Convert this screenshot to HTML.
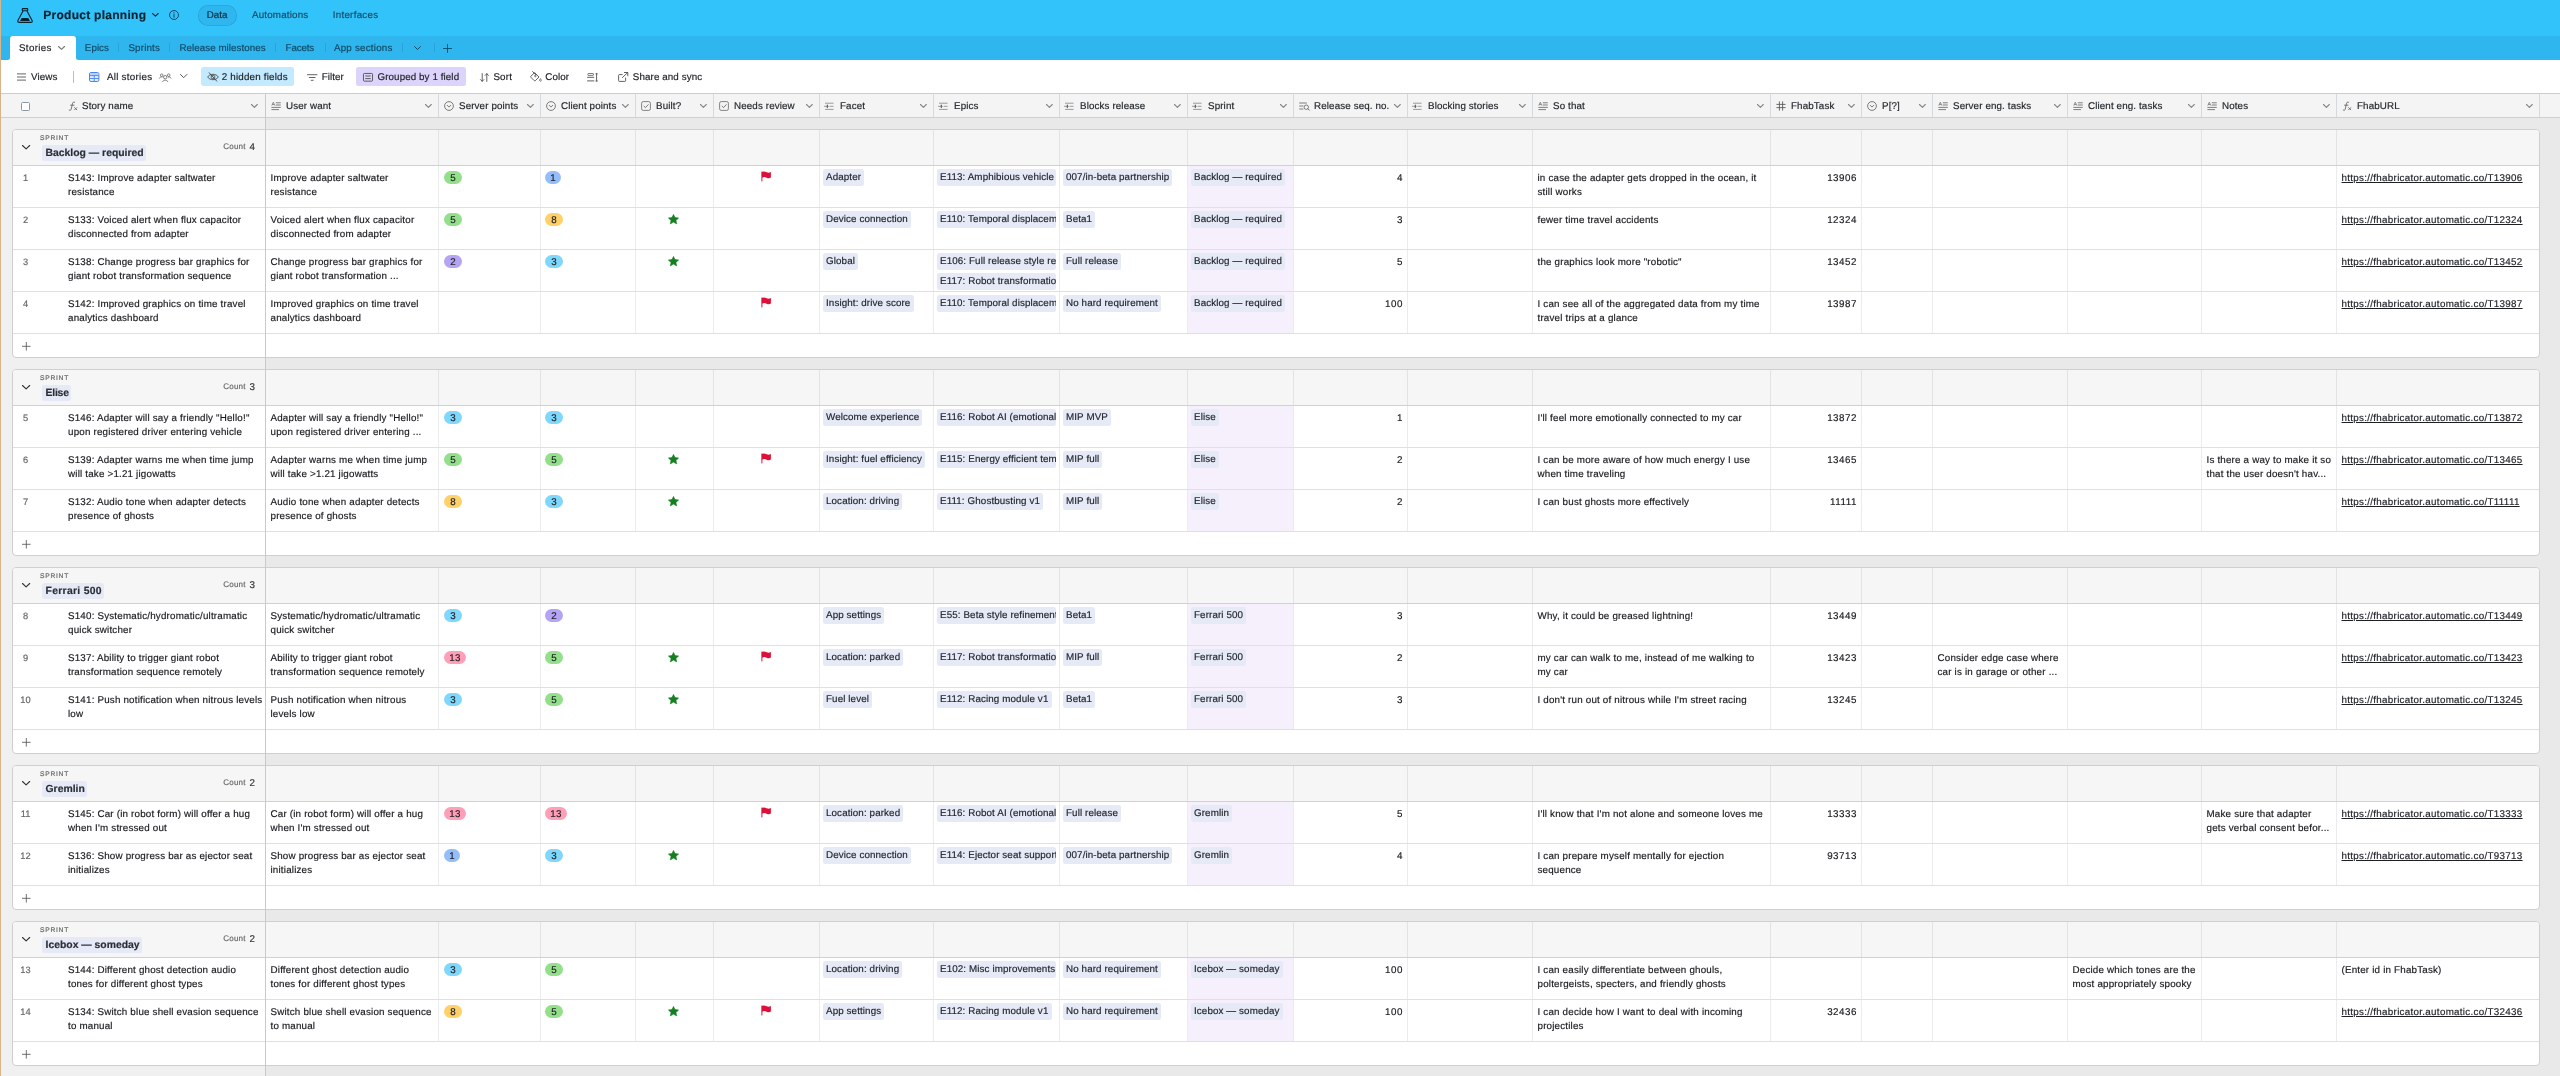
<!DOCTYPE html><html><head><meta charset="utf-8"><title>Product planning</title><style>
*{box-sizing:border-box;margin:0;padding:0}
html{width:2560px;height:1076px;background:#e9e9e9}
body{position:relative;width:2560px;height:1076px;overflow:hidden;background:#e9e9e9;font-family:"Liberation Sans",sans-serif;font-size:9.8px;color:#1d1f25;-webkit-font-smoothing:antialiased;text-rendering:geometricPrecision}
body{will-change:transform;-webkit-text-stroke:0.17px}
.abs{position:absolute}
#strip{left:0;top:0;width:1px;height:1076px;background:#d8b48b;z-index:50}
#top{left:0;top:0;width:2560px;height:36px;background:#33c3fb}
#tabs{left:0;top:36px;width:2560px;height:24px;background:#2fb6ee}
#tool{left:0;top:60px;width:2560px;height:34px;background:#fff;border-bottom:1px solid #cdcdcd}
#hdr{left:0;top:94px;width:2560px;height:24px;background:#f4f4f4;border-bottom:1px solid #cfcfcf}
#leftbg{left:0;top:118px;width:265px;height:958px;background:#f0f0f0}
#frozen{left:265px;top:94px;width:1px;height:982px;background:#c9c9c9;z-index:20}
.t{position:absolute;white-space:nowrap;line-height:12px}
svg{position:absolute;overflow:visible}
/* header cells */
.hc{position:absolute;top:0;height:23px;border-right:1px solid #d6dade}
.hc .ht{position:absolute;left:20px;top:6.9px;line-height:12px;font-size:9.8px;color:#1f2328;white-space:nowrap;letter-spacing:.12px}
.hc svg.ic{left:5px;top:6.7px}
.hc svg.cv{right:6.6px;top:10px}
/* groups */
.g{position:absolute;left:12px;width:2528px;border:1px solid #cfcfcf;border-radius:4px;background:#fff;overflow:hidden}
.gh{position:relative;height:36px;background:#f6f6f6;border-bottom:1px solid #d1d1d1}
.gh i{position:absolute;top:0;width:1px;height:35px;background:#e3e3e3}
.row{position:relative;height:42px;border-bottom:1px solid #dde1e3}
.row i,.row b.f{position:absolute;top:0;width:1px;height:41px;background:#ebeced}
.row b.f,.gh b.f,.add b.f{position:absolute;left:252px;top:0;width:1px;background:#c9c9c9}
.gh b.f{height:35px}.row b.f{height:42px}.add b.f{height:23px}
.add{position:relative;height:23px}
.c{position:absolute;top:0;height:41px;overflow:hidden;padding:5.9px 5px 0 4.5px;line-height:14px;font-size:9.8px;letter-spacing:.19px;white-space:nowrap;color:#191a1e}
.c.r{text-align:right;padding-right:4.1px;letter-spacing:.5px}
.num{position:absolute;left:0;width:25px;top:6px;text-align:center;font-size:9.3px;color:#666;line-height:12px}
.pill{position:absolute;top:5px;height:13px;border-radius:7px;line-height:15px;font-size:9.8px;text-align:center;color:#1d1f25}
.lk{position:absolute;left:3px;height:16.5px;border-radius:2.5px;background:#e6eaf7;padding:1.9px 3.1px 0 3px;line-height:14px;font-size:9.8px;letter-spacing:.11px;white-space:nowrap;overflow:hidden;color:#23262c}
.sp{background:#f5f0fc}
.u{color:#1d1f25;text-decoration:underline;letter-spacing:.3px}
</style></head><body>
<div id="top" class="abs"></div><div id="tabs" class="abs"></div><div id="tool" class="abs"></div><div id="hdr" class="abs"></div><div id="leftbg" class="abs"></div><div id="frozen" class="abs"></div><div id="strip" class="abs"></div>
<svg style="left:17px;top:8px" width="16" height="15" viewBox="0 0 16 15"><rect x="5.3" y="0.6" width="5.4" height="2.2" rx="0.5" fill="none" stroke="#07212d" stroke-width="1.1"/><path d="M6 3 L0.9 12.6 Q0.4 14.2 2 14.3 H14 Q15.6 14.2 15.1 12.6 L10 3" fill="none" stroke="#07212d" stroke-width="1.15" stroke-linejoin="round"/><path d="M4.7 9.9 H11.3 L12.9 13 H3.1 Z" fill="#07212d"/></svg><div class="t" style="left:43.3px;top:7.5px;font-size:12px;font-weight:700;line-height:14px;letter-spacing:.27px;color:#07212d">Product planning</div><svg class="" style="left:152.4px;top:13.2px" width="6.8" height="3.7" viewBox="0 0 6.8 3.7"><path d="M0.5 0.5 L3.4 3.2 L6.3 0.5" fill="none" stroke="#0c3346" stroke-width="1.1" stroke-linecap="round" stroke-linejoin="round"/></svg><svg style="left:169px;top:9.9px" width="10" height="10" viewBox="0 0 10 10"><circle cx="5" cy="5" r="4.45" fill="none" stroke="#0e3d55" stroke-width="0.95"/><path d="M5 4.5 V7.3" stroke="#0e3d55" stroke-width="0.95" stroke-linecap="round"/><circle cx="4.9" cy="2.9" r="0.6" fill="#0e3d55"/></svg><div class="abs" style="left:198px;top:5px;width:38.7px;height:21px;border-radius:11px;background:#2fb6ee;box-shadow:inset 0 0 0 .6px rgba(0,70,110,.22)"></div><div class="t" style="left:206.8px;top:9.9px;color:#0d3040;letter-spacing:-.05px">Data</div><div class="t" style="left:252px;top:9.9px;color:#134a63;letter-spacing:.17px">Automations</div><div class="t" style="left:332.7px;top:9.9px;color:#134a63;letter-spacing:.27px">Interfaces</div>
<div class="abs" style="left:8px;top:58px;width:70px;height:2px;background:#fff"></div><div class="abs" style="left:6px;top:54px;width:4px;height:6px;background:#2fb6ee;border-bottom-right-radius:2.5px"></div><div class="abs" style="left:76px;top:54px;width:4px;height:6px;background:#2fb6ee;border-bottom-left-radius:2.5px"></div><div class="abs" style="left:10px;top:36px;width:66px;height:24px;background:#fff;border-radius:3px 3px 0 0"></div><div class="t" style="left:19px;top:42.9px;color:#1d1f25;letter-spacing:.32px">Stories</div><svg class="" style="left:57.5px;top:46.3px" width="7" height="3.8" viewBox="0 0 7 3.8"><path d="M0.5 0.5 L3.5 3.3 L6.5 0.5" fill="none" stroke="#777" stroke-width="1.1" stroke-linecap="round" stroke-linejoin="round"/></svg><div class="t" style="left:84.8px;top:42.9px;color:#104a66;letter-spacing:0.05px">Epics</div><div class="t" style="left:128.4px;top:42.9px;color:#104a66;letter-spacing:0.17px">Sprints</div><div class="t" style="left:179.4px;top:42.9px;color:#104a66;letter-spacing:0.04px">Release milestones</div><div class="t" style="left:285.6px;top:42.9px;color:#104a66;letter-spacing:-0.18px">Facets</div><div class="t" style="left:333.9px;top:42.9px;color:#104a66;letter-spacing:0.22px">App sections</div><div class="abs" style="left:118px;top:43px;width:1px;height:9px;background:#2aa3d6"></div><div class="abs" style="left:169px;top:43px;width:1px;height:9px;background:#2aa3d6"></div><div class="abs" style="left:275px;top:43px;width:1px;height:9px;background:#2aa3d6"></div><div class="abs" style="left:324.5px;top:43px;width:1px;height:9px;background:#2aa3d6"></div><div class="abs" style="left:402px;top:43px;width:1px;height:9px;background:#2aa3d6"></div><div class="abs" style="left:433.5px;top:43px;width:1px;height:9px;background:#2aa3d6"></div><svg class="" style="left:414.4px;top:46.3px" width="7" height="4" viewBox="0 0 7 4"><path d="M0.5 0.5 L3.5 3.5 L6.5 0.5" fill="none" stroke="#104a66" stroke-width="1.0" stroke-linecap="round" stroke-linejoin="round"/></svg><svg style="left:443.4px;top:43.8px" width="9" height="9" viewBox="0 0 9 9"><path d="M4.5 0.5 V8.5 M0.5 4.5 H8.5" stroke="#104a66" stroke-width="0.9" stroke-linecap="round"/></svg>
<svg style="left:17.4px;top:73px" width="9" height="8" viewBox="0 0 9 8"><path d="M0.4 0.9 H8.6 M0.4 4 H8.6 M0.4 7.1 H8.6" stroke="#555" stroke-width="0.9" stroke-linecap="round"/></svg><div class="t" style="left:31px;top:71.9px;color:#1d1f25;letter-spacing:.12px">Views</div><div class="abs" style="left:73px;top:71px;width:1px;height:12px;background:#bdbdbd"></div><svg style="left:88.8px;top:72px" width="10.4" height="10" viewBox="0 0 10.4 10"><rect x="0.5" y="0.5" width="9.4" height="9" rx="1.4" fill="#e4edff" stroke="#3f7ff2" stroke-width="0.95"/><rect x="1" y="1" width="8.4" height="2.4" fill="#bcd1fb"/><path d="M0.5 3.6 H9.9 M0.5 6.5 H9.9 M5.2 3.6 V9.5" stroke="#3f7ff2" stroke-width="0.85"/></svg><div class="t" style="left:106.9px;top:71.9px;color:#1d1f25;letter-spacing:.27px">All stories</div><svg style="left:159px;top:72.5px" width="12.4" height="9" viewBox="0 0 12.4 9"><circle cx="6.2" cy="4.2" r="1.7" fill="none" stroke="#555" stroke-width="0.75"/><path d="M3.6 8.6 C4 6.6 8.4 6.6 8.8 8.6" fill="none" stroke="#555" stroke-width="0.75" stroke-linecap="round"/><circle cx="2.7" cy="2.2" r="1.3" fill="none" stroke="#555" stroke-width="0.7"/><path d="M0.4 5.2 C0.8 4 2 3.8 3 4" fill="none" stroke="#555" stroke-width="0.7" stroke-linecap="round"/><circle cx="9.7" cy="2.2" r="1.3" fill="none" stroke="#555" stroke-width="0.7"/><path d="M12 5.2 C11.6 4 10.4 3.8 9.4 4" fill="none" stroke="#555" stroke-width="0.7" stroke-linecap="round"/></svg><svg class="" style="left:179.5px;top:74px" width="7.4" height="4.2" viewBox="0 0 7.4 4.2"><path d="M0.5 0.5 L3.7 3.7 L6.9 0.5" fill="none" stroke="#555" stroke-width="1.0" stroke-linecap="round" stroke-linejoin="round"/></svg><div class="abs" style="left:201px;top:67px;width:93px;height:19px;border-radius:2.5px;background:#c3eaff"></div><svg style="left:207px;top:71.5px" width="12" height="10" viewBox="0 0 12 10"><path d="M0.7 5 C2.6 1.4 9.4 1.4 11.3 5 C9.4 8.6 2.6 8.6 0.7 5 Z" fill="none" stroke="#444" stroke-width="0.85"/><circle cx="6" cy="5" r="1.9" fill="none" stroke="#444" stroke-width="0.85"/><path d="M2.2 0.8 L9.8 9.2" stroke="#444" stroke-width="0.9" stroke-linecap="round"/></svg><div class="t" style="left:221.7px;top:71.9px;color:#1d1f25;letter-spacing:.2px">2 hidden fields</div><svg style="left:306.6px;top:73.5px" width="10.4" height="7" viewBox="0 0 10.4 7"><path d="M0.4 0.7 H10 M2.3 3.5 H8.1 M4.2 6.3 H6.2" stroke="#555" stroke-width="0.9" stroke-linecap="round"/></svg><div class="t" style="left:321.7px;top:71.9px;color:#1d1f25;letter-spacing:.06px">Filter</div><div class="abs" style="left:356px;top:67px;width:110px;height:19px;border-radius:2.5px;background:#ddd4fb"></div><svg style="left:363px;top:72.5px" width="10" height="8.6" viewBox="0 0 10 8.6"><rect x="0.45" y="0.45" width="9.1" height="7.7" rx="0.9" fill="none" stroke="#444" stroke-width="0.85"/><path d="M2.3 3 H7.7 M2.3 5.6 H7.7" stroke="#444" stroke-width="0.85"/></svg><div class="t" style="left:377.5px;top:71.9px;color:#1d1f25;letter-spacing:.09px">Grouped by 1 field</div><svg style="left:479.5px;top:72.5px" width="9" height="9" viewBox="0 0 9 9"><path d="M2.2 0.6 V8.2 M0.5 6.6 L2.2 8.3 L3.9 6.6 M6.8 8.4 V0.8 M5.1 2.4 L6.8 0.7 L8.5 2.4" fill="none" stroke="#444" stroke-width="0.85" stroke-linecap="round" stroke-linejoin="round"/></svg><div class="t" style="left:493.4px;top:71.9px;color:#1d1f25;letter-spacing:.18px">Sort</div><svg style="left:530px;top:71px" width="12" height="11" viewBox="0 0 12 11"><path d="M4.6 1.6 L9 6 L5.4 9.6 Q4.8 10.2 4.2 9.6 L1 6.4 Q0.4 5.8 1 5.2 Z" fill="none" stroke="#444" stroke-width="0.85" stroke-linejoin="round"/><path d="M2.6 0.6 L5.6 3.6" stroke="#444" stroke-width="0.85" stroke-linecap="round"/><circle cx="5.4" cy="5" r="0.8" fill="none" stroke="#444" stroke-width="0.7"/><path d="M10.4 7.6 C11.2 8.8 11.4 9.2 11.1 9.8 C10.8 10.4 10 10.4 9.7 9.8 C9.4 9.2 9.6 8.8 10.4 7.6 Z" fill="none" stroke="#444" stroke-width="0.7"/></svg><div class="t" style="left:545.3px;top:71.9px;color:#1d1f25;letter-spacing:.06px">Color</div><svg style="left:587.4px;top:72.5px" width="11" height="9" viewBox="0 0 11 9"><path d="M0.5 4.3 H6.8 M0.5 7.9 H6.8" stroke="#444" stroke-width="0.85" stroke-linecap="round"/><rect x="0.9" y="0.5" width="5.5" height="1.9" rx="0.5" fill="none" stroke="#444" stroke-width="0.7"/><path d="M9.6 0.8 V8 M8.9 0.8 H10.3 M8.9 8 H10.3" stroke="#444" stroke-width="0.85" stroke-linecap="round"/></svg><svg style="left:618px;top:72px" width="10.5" height="10" viewBox="0 0 10.5 10"><path d="M4.2 2.6 H1.4 Q0.6 2.6 0.6 3.4 V8.6 Q0.6 9.4 1.4 9.4 H6.8 Q7.6 9.4 7.6 8.6 V6" fill="none" stroke="#444" stroke-width="0.85" stroke-linecap="round"/><path d="M4.4 5.6 L9.6 0.6 M6.4 0.5 H9.8 V3.8" fill="none" stroke="#444" stroke-width="0.85" stroke-linecap="round" stroke-linejoin="round"/></svg><div class="t" style="left:632.8px;top:71.9px;color:#1d1f25;letter-spacing:.1px">Share and sync</div>
<div class="abs" style="left:0;top:94px;width:2560px;height:23px"><div class="abs" style="left:21px;top:8px;width:9px;height:8.5px;border:1.2px solid #8b97a3;border-radius:1.6px;background:#fff"></div><div class="hc" style="left:0;width:265px;border-right:none"><svg class="ic" style="left:68px" width="10" height="10" viewBox="0 0 10 10"><path d="M6.6 1.2 C5.2 0.6 4.6 1.6 4.4 2.8 L3.3 8 C3.1 9.2 2.3 9.6 1.2 9.1 M2.6 4.2 H6" fill="none" stroke="#666" stroke-width="0.9" stroke-linecap="round"/><path d="M6.6 6.6 L8.8 8.8 M8.8 6.6 L6.6 8.8" stroke="#666" stroke-width="0.9" stroke-linecap="round"/></svg><div class="ht" style="left:82px">Story name</div><svg class="cv" style="right:7.5px" width="6.8" height="3.9" viewBox="0 0 6.8 3.9"><path d="M0.5 0.5 L3.4 3.4 L6.3 0.5" fill="none" stroke="#868686" stroke-width="1.1" stroke-linecap="round" stroke-linejoin="round"/></svg></div><div class="hc" style="left:266px;width:173px"><svg class="ic" width="10" height="10" viewBox="0 0 10 10"><path d="M0.8 4.6 L2.3 1.2 L3.8 4.6 M1.3 3.5 H3.3" fill="none" stroke="#777" stroke-width="0.8" stroke-linejoin="round"/><path d="M5.2 1.8 H9.4 M5.2 4 H9.4 M0.8 6.4 H9.4 M0.8 8.6 H7.6" stroke="#777" stroke-width="0.95" stroke-linecap="round"/></svg><div class="ht">User want</div><svg class="cv" style="" width="6.8" height="3.9" viewBox="0 0 6.8 3.9"><path d="M0.5 0.5 L3.4 3.4 L6.3 0.5" fill="none" stroke="#868686" stroke-width="1.1" stroke-linecap="round" stroke-linejoin="round"/></svg></div><div class="hc" style="left:439px;width:102px"><svg class="ic" width="10" height="10" viewBox="0 0 10 10"><circle cx="5" cy="5" r="4.4" fill="none" stroke="#666" stroke-width="0.85"/><path d="M3.2 4.3 L5 6.1 L6.8 4.3" fill="none" stroke="#666" stroke-width="0.85" stroke-linecap="round" stroke-linejoin="round"/></svg><div class="ht">Server points</div><svg class="cv" style="" width="6.8" height="3.9" viewBox="0 0 6.8 3.9"><path d="M0.5 0.5 L3.4 3.4 L6.3 0.5" fill="none" stroke="#868686" stroke-width="1.1" stroke-linecap="round" stroke-linejoin="round"/></svg></div><div class="hc" style="left:541px;width:95px"><svg class="ic" width="10" height="10" viewBox="0 0 10 10"><circle cx="5" cy="5" r="4.4" fill="none" stroke="#666" stroke-width="0.85"/><path d="M3.2 4.3 L5 6.1 L6.8 4.3" fill="none" stroke="#666" stroke-width="0.85" stroke-linecap="round" stroke-linejoin="round"/></svg><div class="ht">Client points</div><svg class="cv" style="" width="6.8" height="3.9" viewBox="0 0 6.8 3.9"><path d="M0.5 0.5 L3.4 3.4 L6.3 0.5" fill="none" stroke="#868686" stroke-width="1.1" stroke-linecap="round" stroke-linejoin="round"/></svg></div><div class="hc" style="left:636px;width:78px"><svg class="ic" width="10" height="10" viewBox="0 0 10 10"><rect x="0.6" y="0.6" width="8.8" height="8.8" rx="1.6" fill="none" stroke="#777" stroke-width="0.9"/><path d="M3 5.2 L4.5 6.6 L7.2 3.7" fill="none" stroke="#666" stroke-width="0.85" stroke-linecap="round" stroke-linejoin="round"/></svg><div class="ht">Built?</div><svg class="cv" style="" width="6.8" height="3.9" viewBox="0 0 6.8 3.9"><path d="M0.5 0.5 L3.4 3.4 L6.3 0.5" fill="none" stroke="#868686" stroke-width="1.1" stroke-linecap="round" stroke-linejoin="round"/></svg></div><div class="hc" style="left:714px;width:106px"><svg class="ic" width="10" height="10" viewBox="0 0 10 10"><rect x="0.6" y="0.6" width="8.8" height="8.8" rx="1.6" fill="none" stroke="#777" stroke-width="0.9"/><path d="M3 5.2 L4.5 6.6 L7.2 3.7" fill="none" stroke="#666" stroke-width="0.85" stroke-linecap="round" stroke-linejoin="round"/></svg><div class="ht">Needs review</div><svg class="cv" style="" width="6.8" height="3.9" viewBox="0 0 6.8 3.9"><path d="M0.5 0.5 L3.4 3.4 L6.3 0.5" fill="none" stroke="#868686" stroke-width="1.1" stroke-linecap="round" stroke-linejoin="round"/></svg></div><div class="hc" style="left:820px;width:114px"><svg class="ic" width="10" height="10" viewBox="0 0 10 10"><path d="M0.4 2.2 H8.2 M-0.6 5.3 H3.4 M5 5.3 H8.2 M0.4 8.4 H8.2" stroke="#8a8a8a" stroke-width="0.85" stroke-linecap="round"/><path d="M2.3 4.1 V6.5" stroke="#555" stroke-width="1.1" stroke-linecap="round"/></svg><div class="ht">Facet</div><svg class="cv" style="" width="6.8" height="3.9" viewBox="0 0 6.8 3.9"><path d="M0.5 0.5 L3.4 3.4 L6.3 0.5" fill="none" stroke="#868686" stroke-width="1.1" stroke-linecap="round" stroke-linejoin="round"/></svg></div><div class="hc" style="left:934px;width:126px"><svg class="ic" width="10" height="10" viewBox="0 0 10 10"><path d="M0.4 2.2 H8.2 M-0.6 5.3 H3.4 M5 5.3 H8.2 M0.4 8.4 H8.2" stroke="#8a8a8a" stroke-width="0.85" stroke-linecap="round"/><path d="M2.3 4.1 V6.5" stroke="#555" stroke-width="1.1" stroke-linecap="round"/></svg><div class="ht">Epics</div><svg class="cv" style="" width="6.8" height="3.9" viewBox="0 0 6.8 3.9"><path d="M0.5 0.5 L3.4 3.4 L6.3 0.5" fill="none" stroke="#868686" stroke-width="1.1" stroke-linecap="round" stroke-linejoin="round"/></svg></div><div class="hc" style="left:1060px;width:128px"><svg class="ic" width="10" height="10" viewBox="0 0 10 10"><path d="M0.4 2.2 H8.2 M-0.6 5.3 H3.4 M5 5.3 H8.2 M0.4 8.4 H8.2" stroke="#8a8a8a" stroke-width="0.85" stroke-linecap="round"/><path d="M2.3 4.1 V6.5" stroke="#555" stroke-width="1.1" stroke-linecap="round"/></svg><div class="ht">Blocks release</div><svg class="cv" style="" width="6.8" height="3.9" viewBox="0 0 6.8 3.9"><path d="M0.5 0.5 L3.4 3.4 L6.3 0.5" fill="none" stroke="#868686" stroke-width="1.1" stroke-linecap="round" stroke-linejoin="round"/></svg></div><div class="hc" style="left:1188px;width:106px"><svg class="ic" width="10" height="10" viewBox="0 0 10 10"><path d="M0.4 2.2 H8.2 M-0.6 5.3 H3.4 M5 5.3 H8.2 M0.4 8.4 H8.2" stroke="#8a8a8a" stroke-width="0.85" stroke-linecap="round"/><path d="M2.3 4.1 V6.5" stroke="#555" stroke-width="1.1" stroke-linecap="round"/></svg><div class="ht">Sprint</div><svg class="cv" style="" width="6.8" height="3.9" viewBox="0 0 6.8 3.9"><path d="M0.5 0.5 L3.4 3.4 L6.3 0.5" fill="none" stroke="#868686" stroke-width="1.1" stroke-linecap="round" stroke-linejoin="round"/></svg></div><div class="hc" style="left:1294px;width:114px"><svg class="ic" width="11" height="10" viewBox="0 0 11 10"><path d="M0.6 2 H7.5 M0.6 5 H4 M0.6 8 H4" stroke="#777" stroke-width="0.95" stroke-linecap="round"/><circle cx="7.3" cy="6.2" r="2.2" fill="none" stroke="#666" stroke-width="0.85"/><path d="M9 7.9 L10.4 9.3" stroke="#666" stroke-width="0.9" stroke-linecap="round"/></svg><div class="ht">Release seq. no.</div><svg class="cv" style="" width="6.8" height="3.9" viewBox="0 0 6.8 3.9"><path d="M0.5 0.5 L3.4 3.4 L6.3 0.5" fill="none" stroke="#868686" stroke-width="1.1" stroke-linecap="round" stroke-linejoin="round"/></svg></div><div class="hc" style="left:1408px;width:125px"><svg class="ic" width="10" height="10" viewBox="0 0 10 10"><path d="M0.4 2.2 H8.2 M-0.6 5.3 H3.4 M5 5.3 H8.2 M0.4 8.4 H8.2" stroke="#8a8a8a" stroke-width="0.85" stroke-linecap="round"/><path d="M2.3 4.1 V6.5" stroke="#555" stroke-width="1.1" stroke-linecap="round"/></svg><div class="ht">Blocking stories</div><svg class="cv" style="" width="6.8" height="3.9" viewBox="0 0 6.8 3.9"><path d="M0.5 0.5 L3.4 3.4 L6.3 0.5" fill="none" stroke="#868686" stroke-width="1.1" stroke-linecap="round" stroke-linejoin="round"/></svg></div><div class="hc" style="left:1533px;width:238px"><svg class="ic" width="10" height="10" viewBox="0 0 10 10"><path d="M0.8 4.6 L2.3 1.2 L3.8 4.6 M1.3 3.5 H3.3" fill="none" stroke="#777" stroke-width="0.8" stroke-linejoin="round"/><path d="M5.2 1.8 H9.4 M5.2 4 H9.4 M0.8 6.4 H9.4 M0.8 8.6 H7.6" stroke="#777" stroke-width="0.95" stroke-linecap="round"/></svg><div class="ht">So that</div><svg class="cv" style="" width="6.8" height="3.9" viewBox="0 0 6.8 3.9"><path d="M0.5 0.5 L3.4 3.4 L6.3 0.5" fill="none" stroke="#868686" stroke-width="1.1" stroke-linecap="round" stroke-linejoin="round"/></svg></div><div class="hc" style="left:1771px;width:91px"><svg class="ic" width="10" height="10" viewBox="0 0 10 10"><path d="M3.4 0.8 V9.2 M6.6 0.8 V9.2 M0.8 3.4 H9.2 M0.8 6.6 H9.2" stroke="#555" stroke-width="0.85" stroke-linecap="round"/></svg><div class="ht">FhabTask</div><svg class="cv" style="" width="6.8" height="3.9" viewBox="0 0 6.8 3.9"><path d="M0.5 0.5 L3.4 3.4 L6.3 0.5" fill="none" stroke="#868686" stroke-width="1.1" stroke-linecap="round" stroke-linejoin="round"/></svg></div><div class="hc" style="left:1862px;width:71px"><svg class="ic" width="10" height="10" viewBox="0 0 10 10"><circle cx="5" cy="5" r="4.4" fill="none" stroke="#666" stroke-width="0.85"/><path d="M3.2 4.3 L5 6.1 L6.8 4.3" fill="none" stroke="#666" stroke-width="0.85" stroke-linecap="round" stroke-linejoin="round"/></svg><div class="ht">P[?]</div><svg class="cv" style="" width="6.8" height="3.9" viewBox="0 0 6.8 3.9"><path d="M0.5 0.5 L3.4 3.4 L6.3 0.5" fill="none" stroke="#868686" stroke-width="1.1" stroke-linecap="round" stroke-linejoin="round"/></svg></div><div class="hc" style="left:1933px;width:135px"><svg class="ic" width="10" height="10" viewBox="0 0 10 10"><path d="M0.8 4.6 L2.3 1.2 L3.8 4.6 M1.3 3.5 H3.3" fill="none" stroke="#777" stroke-width="0.8" stroke-linejoin="round"/><path d="M5.2 1.8 H9.4 M5.2 4 H9.4 M0.8 6.4 H9.4 M0.8 8.6 H7.6" stroke="#777" stroke-width="0.95" stroke-linecap="round"/></svg><div class="ht">Server eng. tasks</div><svg class="cv" style="" width="6.8" height="3.9" viewBox="0 0 6.8 3.9"><path d="M0.5 0.5 L3.4 3.4 L6.3 0.5" fill="none" stroke="#868686" stroke-width="1.1" stroke-linecap="round" stroke-linejoin="round"/></svg></div><div class="hc" style="left:2068px;width:134px"><svg class="ic" width="10" height="10" viewBox="0 0 10 10"><path d="M0.8 4.6 L2.3 1.2 L3.8 4.6 M1.3 3.5 H3.3" fill="none" stroke="#777" stroke-width="0.8" stroke-linejoin="round"/><path d="M5.2 1.8 H9.4 M5.2 4 H9.4 M0.8 6.4 H9.4 M0.8 8.6 H7.6" stroke="#777" stroke-width="0.95" stroke-linecap="round"/></svg><div class="ht">Client eng. tasks</div><svg class="cv" style="" width="6.8" height="3.9" viewBox="0 0 6.8 3.9"><path d="M0.5 0.5 L3.4 3.4 L6.3 0.5" fill="none" stroke="#868686" stroke-width="1.1" stroke-linecap="round" stroke-linejoin="round"/></svg></div><div class="hc" style="left:2202px;width:135px"><svg class="ic" width="10" height="10" viewBox="0 0 10 10"><path d="M0.8 4.6 L2.3 1.2 L3.8 4.6 M1.3 3.5 H3.3" fill="none" stroke="#777" stroke-width="0.8" stroke-linejoin="round"/><path d="M5.2 1.8 H9.4 M5.2 4 H9.4 M0.8 6.4 H9.4 M0.8 8.6 H7.6" stroke="#777" stroke-width="0.95" stroke-linecap="round"/></svg><div class="ht">Notes</div><svg class="cv" style="" width="6.8" height="3.9" viewBox="0 0 6.8 3.9"><path d="M0.5 0.5 L3.4 3.4 L6.3 0.5" fill="none" stroke="#868686" stroke-width="1.1" stroke-linecap="round" stroke-linejoin="round"/></svg></div><div class="hc" style="left:2337px;width:203px"><svg class="ic" width="10" height="10" viewBox="0 0 10 10"><path d="M6.6 1.2 C5.2 0.6 4.6 1.6 4.4 2.8 L3.3 8 C3.1 9.2 2.3 9.6 1.2 9.1 M2.6 4.2 H6" fill="none" stroke="#666" stroke-width="0.9" stroke-linecap="round"/><path d="M6.6 6.6 L8.8 8.8 M8.8 6.6 L6.6 8.8" stroke="#666" stroke-width="0.9" stroke-linecap="round"/></svg><div class="ht">FhabURL</div><svg class="cv" style="" width="6.8" height="3.9" viewBox="0 0 6.8 3.9"><path d="M0.5 0.5 L3.4 3.4 L6.3 0.5" fill="none" stroke="#868686" stroke-width="1.1" stroke-linecap="round" stroke-linejoin="round"/></svg></div></div>
<div class="g" style="top:129px;height:229px"><div class="gh"><i style="left:425px"></i><i style="left:527px"></i><i style="left:622px"></i><i style="left:700px"></i><i style="left:806px"></i><i style="left:920px"></i><i style="left:1046px"></i><i style="left:1174px"></i><i style="left:1280px"></i><i style="left:1394px"></i><i style="left:1519px"></i><i style="left:1757px"></i><i style="left:1848px"></i><i style="left:1919px"></i><i style="left:2054px"></i><i style="left:2188px"></i><i style="left:2323px"></i><b class="f"></b><svg class="" style="left:8.9px;top:15.3px" width="8.2" height="4.4" viewBox="0 0 8.2 4.4"><path d="M0.5 0.5 L4.1 3.9000000000000004 L7.699999999999999 0.5" fill="none" stroke="#333" stroke-width="1.1" stroke-linecap="round" stroke-linejoin="round"/></svg><div class="t" style="left:27px;top:5px;font-size:6.7px;letter-spacing:.75px;color:#666;line-height:8px">SPRINT</div><div class="abs" style="left:28.5px;top:15px;height:15.5px;border-radius:2.5px;background:#e6eaf7;padding:0 2.4px 0 4px;font-size:10.4px;font-weight:700;line-height:17.5px;white-space:nowrap;color:#2a2d33;letter-spacing:0px">Backlog — required</div><div class="t" style="right:2293.3px;top:11.3px;font-size:8px;color:#666;letter-spacing:.2px">Count</div><div class="t" style="left:236.5px;top:11.7px;font-size:9.8px;color:#333">4</div></div><div class="row"><i style="left:425px"></i><i style="left:527px"></i><i style="left:622px"></i><i style="left:700px"></i><i style="left:806px"></i><i style="left:920px"></i><i style="left:1046px"></i><i style="left:1174px"></i><i style="left:1280px"></i><i style="left:1394px"></i><i style="left:1519px"></i><i style="left:1757px"></i><i style="left:1848px"></i><i style="left:1919px"></i><i style="left:2054px"></i><i style="left:2188px"></i><i style="left:2323px"></i><b class="f"></b><span class="num">1</span><div class="c" style="left:50.5px;width:201px">S143: Improve adapter saltwater<br>resistance</div><div class="c " style="left:253px;width:172px">Improve adapter saltwater<br>resistance</div><div class="c " style="left:426px;width:101px"><span class="pill" style="left:5px;width:18px;background:#93df8a">5</span></div><div class="c " style="left:528px;width:94px"><span class="pill" style="left:4px;width:16px;background:#95bdf9">1</span></div><div class="c " style="left:623px;width:77px"></div><div class="c " style="left:701px;width:105px"><svg style="left:47px;top:5.4px" width="10.5" height="10.5" viewBox="0 0 10.5 10.5"><path d="M0.9 0.9 V10" stroke="#dc1038" stroke-width="1" stroke-linecap="round"/><path d="M0.9 1 C2.6 -0.2 4.4 0.6 5.6 1.2 C7 1.9 8.4 1.9 9.9 1 V6.6 C8.4 7.6 7 7.5 5.6 6.8 C4.4 6.2 2.6 5.6 0.9 6.8 Z" fill="#dc1038"/></svg></div><div class="c " style="left:807px;width:113px"><span class="lk" style="top:3px;max-width:calc(100% - 6.5px)">Adapter</span></div><div class="c " style="left:921px;width:125px"><span class="lk" style="top:3px;max-width:calc(100% - 6.5px)">E113: Amphibious vehicle</span></div><div class="c " style="left:1047px;width:127px"><span class="lk" style="top:3px;max-width:calc(100% - 6.5px)">007/in-beta partnership</span></div><div class="c sp" style="left:1175px;width:105px"><span class="lk" style="top:3px;max-width:calc(100% - 6.5px)">Backlog — required</span></div><div class="c r" style="left:1281px;width:113px">4</div><div class="c " style="left:1395px;width:124px"></div><div class="c " style="left:1520px;width:237px">in case the adapter gets dropped in the ocean, it<br>still works</div><div class="c r" style="left:1758px;width:90px">13906</div><div class="c " style="left:1849px;width:70px"></div><div class="c " style="left:1920px;width:134px"></div><div class="c " style="left:2055px;width:133px"></div><div class="c " style="left:2189px;width:134px"></div><div class="c " style="left:2324px;width:202px"><span class="u">https://fhabricator.automatic.co/T13906</span></div></div><div class="row"><i style="left:425px"></i><i style="left:527px"></i><i style="left:622px"></i><i style="left:700px"></i><i style="left:806px"></i><i style="left:920px"></i><i style="left:1046px"></i><i style="left:1174px"></i><i style="left:1280px"></i><i style="left:1394px"></i><i style="left:1519px"></i><i style="left:1757px"></i><i style="left:1848px"></i><i style="left:1919px"></i><i style="left:2054px"></i><i style="left:2188px"></i><i style="left:2323px"></i><b class="f"></b><span class="num">2</span><div class="c" style="left:50.5px;width:201px">S133: Voiced alert when flux capacitor<br>disconnected from adapter</div><div class="c " style="left:253px;width:172px">Voiced alert when flux capacitor<br>disconnected from adapter</div><div class="c " style="left:426px;width:101px"><span class="pill" style="left:5px;width:18px;background:#93df8a">5</span></div><div class="c " style="left:528px;width:94px"><span class="pill" style="left:4px;width:18px;background:#ffd168">8</span></div><div class="c " style="left:623px;width:77px"><svg style="left:32.4px;top:5.7px" width="11" height="10.5" viewBox="0 0 11 10.5"><path d="M5.5 0.4 L7 3.6 L10.6 4 L7.9 6.4 L8.7 9.9 L5.5 8.1 L2.3 9.9 L3.1 6.4 L0.4 4 L4 3.6 Z" fill="#13801f" stroke="#13801f" stroke-width="0.6" stroke-linejoin="round"/></svg></div><div class="c " style="left:701px;width:105px"></div><div class="c " style="left:807px;width:113px"><span class="lk" style="top:3px;max-width:calc(100% - 6.5px)">Device connection</span></div><div class="c " style="left:921px;width:125px"><span class="lk" style="top:3px;max-width:calc(100% - 6.5px)">E110: Temporal displacement</span></div><div class="c " style="left:1047px;width:127px"><span class="lk" style="top:3px;max-width:calc(100% - 6.5px)">Beta1</span></div><div class="c sp" style="left:1175px;width:105px"><span class="lk" style="top:3px;max-width:calc(100% - 6.5px)">Backlog — required</span></div><div class="c r" style="left:1281px;width:113px">3</div><div class="c " style="left:1395px;width:124px"></div><div class="c " style="left:1520px;width:237px">fewer time travel accidents</div><div class="c r" style="left:1758px;width:90px">12324</div><div class="c " style="left:1849px;width:70px"></div><div class="c " style="left:1920px;width:134px"></div><div class="c " style="left:2055px;width:133px"></div><div class="c " style="left:2189px;width:134px"></div><div class="c " style="left:2324px;width:202px"><span class="u">https://fhabricator.automatic.co/T12324</span></div></div><div class="row"><i style="left:425px"></i><i style="left:527px"></i><i style="left:622px"></i><i style="left:700px"></i><i style="left:806px"></i><i style="left:920px"></i><i style="left:1046px"></i><i style="left:1174px"></i><i style="left:1280px"></i><i style="left:1394px"></i><i style="left:1519px"></i><i style="left:1757px"></i><i style="left:1848px"></i><i style="left:1919px"></i><i style="left:2054px"></i><i style="left:2188px"></i><i style="left:2323px"></i><b class="f"></b><span class="num">3</span><div class="c" style="left:50.5px;width:201px">S138: Change progress bar graphics for<br>giant robot transformation sequence</div><div class="c " style="left:253px;width:172px">Change progress bar graphics for<br>giant robot transformation ...</div><div class="c " style="left:426px;width:101px"><span class="pill" style="left:5px;width:18px;background:#b5a4f4">2</span></div><div class="c " style="left:528px;width:94px"><span class="pill" style="left:4px;width:18px;background:#80d7fc">3</span></div><div class="c " style="left:623px;width:77px"><svg style="left:32.4px;top:5.7px" width="11" height="10.5" viewBox="0 0 11 10.5"><path d="M5.5 0.4 L7 3.6 L10.6 4 L7.9 6.4 L8.7 9.9 L5.5 8.1 L2.3 9.9 L3.1 6.4 L0.4 4 L4 3.6 Z" fill="#13801f" stroke="#13801f" stroke-width="0.6" stroke-linejoin="round"/></svg></div><div class="c " style="left:701px;width:105px"></div><div class="c " style="left:807px;width:113px"><span class="lk" style="top:3px;max-width:calc(100% - 6.5px)">Global</span></div><div class="c " style="left:921px;width:125px"><span class="lk" style="top:3px;max-width:calc(100% - 6.5px)">E106: Full release style revamp</span><span class="lk" style="top:23px;max-width:calc(100% - 6.5px)">E117: Robot transformation</span></div><div class="c " style="left:1047px;width:127px"><span class="lk" style="top:3px;max-width:calc(100% - 6.5px)">Full release</span></div><div class="c sp" style="left:1175px;width:105px"><span class="lk" style="top:3px;max-width:calc(100% - 6.5px)">Backlog — required</span></div><div class="c r" style="left:1281px;width:113px">5</div><div class="c " style="left:1395px;width:124px"></div><div class="c " style="left:1520px;width:237px">the graphics look more "robotic"</div><div class="c r" style="left:1758px;width:90px">13452</div><div class="c " style="left:1849px;width:70px"></div><div class="c " style="left:1920px;width:134px"></div><div class="c " style="left:2055px;width:133px"></div><div class="c " style="left:2189px;width:134px"></div><div class="c " style="left:2324px;width:202px"><span class="u">https://fhabricator.automatic.co/T13452</span></div></div><div class="row"><i style="left:425px"></i><i style="left:527px"></i><i style="left:622px"></i><i style="left:700px"></i><i style="left:806px"></i><i style="left:920px"></i><i style="left:1046px"></i><i style="left:1174px"></i><i style="left:1280px"></i><i style="left:1394px"></i><i style="left:1519px"></i><i style="left:1757px"></i><i style="left:1848px"></i><i style="left:1919px"></i><i style="left:2054px"></i><i style="left:2188px"></i><i style="left:2323px"></i><b class="f"></b><span class="num">4</span><div class="c" style="left:50.5px;width:201px">S142: Improved graphics on time travel<br>analytics dashboard</div><div class="c " style="left:253px;width:172px">Improved graphics on time travel<br>analytics dashboard</div><div class="c " style="left:426px;width:101px"></div><div class="c " style="left:528px;width:94px"></div><div class="c " style="left:623px;width:77px"></div><div class="c " style="left:701px;width:105px"><svg style="left:47px;top:5.4px" width="10.5" height="10.5" viewBox="0 0 10.5 10.5"><path d="M0.9 0.9 V10" stroke="#dc1038" stroke-width="1" stroke-linecap="round"/><path d="M0.9 1 C2.6 -0.2 4.4 0.6 5.6 1.2 C7 1.9 8.4 1.9 9.9 1 V6.6 C8.4 7.6 7 7.5 5.6 6.8 C4.4 6.2 2.6 5.6 0.9 6.8 Z" fill="#dc1038"/></svg></div><div class="c " style="left:807px;width:113px"><span class="lk" style="top:3px;max-width:calc(100% - 6.5px)">Insight: drive score</span></div><div class="c " style="left:921px;width:125px"><span class="lk" style="top:3px;max-width:calc(100% - 6.5px)">E110: Temporal displacement</span></div><div class="c " style="left:1047px;width:127px"><span class="lk" style="top:3px;max-width:calc(100% - 6.5px)">No hard requirement</span></div><div class="c sp" style="left:1175px;width:105px"><span class="lk" style="top:3px;max-width:calc(100% - 6.5px)">Backlog — required</span></div><div class="c r" style="left:1281px;width:113px">100</div><div class="c " style="left:1395px;width:124px"></div><div class="c " style="left:1520px;width:237px">I can see all of the aggregated data from my time<br>travel trips at a glance</div><div class="c r" style="left:1758px;width:90px">13987</div><div class="c " style="left:1849px;width:70px"></div><div class="c " style="left:1920px;width:134px"></div><div class="c " style="left:2055px;width:133px"></div><div class="c " style="left:2189px;width:134px"></div><div class="c " style="left:2324px;width:202px"><span class="u">https://fhabricator.automatic.co/T13987</span></div></div><div class="add"><b class="f"></b><svg style="left:8.5px;top:7.5px" width="8.6" height="8.6" viewBox="0 0 8.6 8.6"><path d="M4.3 0.4 V8.2 M0.4 4.3 H8.2" stroke="#555" stroke-width="0.85" stroke-linecap="round"/></svg></div></div>
<div class="g" style="top:369px;height:187px"><div class="gh"><i style="left:425px"></i><i style="left:527px"></i><i style="left:622px"></i><i style="left:700px"></i><i style="left:806px"></i><i style="left:920px"></i><i style="left:1046px"></i><i style="left:1174px"></i><i style="left:1280px"></i><i style="left:1394px"></i><i style="left:1519px"></i><i style="left:1757px"></i><i style="left:1848px"></i><i style="left:1919px"></i><i style="left:2054px"></i><i style="left:2188px"></i><i style="left:2323px"></i><b class="f"></b><svg class="" style="left:8.9px;top:15.3px" width="8.2" height="4.4" viewBox="0 0 8.2 4.4"><path d="M0.5 0.5 L4.1 3.9000000000000004 L7.699999999999999 0.5" fill="none" stroke="#333" stroke-width="1.1" stroke-linecap="round" stroke-linejoin="round"/></svg><div class="t" style="left:27px;top:5px;font-size:6.7px;letter-spacing:.75px;color:#666;line-height:8px">SPRINT</div><div class="abs" style="left:28.5px;top:15px;height:15.5px;border-radius:2.5px;background:#e6eaf7;padding:0 2.4px 0 4px;font-size:10.4px;font-weight:700;line-height:17.5px;white-space:nowrap;color:#2a2d33;letter-spacing:-0.2px">Elise</div><div class="t" style="right:2293.3px;top:11.3px;font-size:8px;color:#666;letter-spacing:.2px">Count</div><div class="t" style="left:236.5px;top:11.7px;font-size:9.8px;color:#333">3</div></div><div class="row"><i style="left:425px"></i><i style="left:527px"></i><i style="left:622px"></i><i style="left:700px"></i><i style="left:806px"></i><i style="left:920px"></i><i style="left:1046px"></i><i style="left:1174px"></i><i style="left:1280px"></i><i style="left:1394px"></i><i style="left:1519px"></i><i style="left:1757px"></i><i style="left:1848px"></i><i style="left:1919px"></i><i style="left:2054px"></i><i style="left:2188px"></i><i style="left:2323px"></i><b class="f"></b><span class="num">5</span><div class="c" style="left:50.5px;width:201px">S146: Adapter will say a friendly "Hello!"<br>upon registered driver entering vehicle</div><div class="c " style="left:253px;width:172px">Adapter will say a friendly "Hello!"<br>upon registered driver entering ...</div><div class="c " style="left:426px;width:101px"><span class="pill" style="left:5px;width:18px;background:#80d7fc">3</span></div><div class="c " style="left:528px;width:94px"><span class="pill" style="left:4px;width:18px;background:#80d7fc">3</span></div><div class="c " style="left:623px;width:77px"></div><div class="c " style="left:701px;width:105px"></div><div class="c " style="left:807px;width:113px"><span class="lk" style="top:3px;max-width:calc(100% - 6.5px)">Welcome experience</span></div><div class="c " style="left:921px;width:125px"><span class="lk" style="top:3px;max-width:calc(100% - 6.5px)">E116: Robot AI (emotional support)</span></div><div class="c " style="left:1047px;width:127px"><span class="lk" style="top:3px;max-width:calc(100% - 6.5px)">MIP MVP</span></div><div class="c sp" style="left:1175px;width:105px"><span class="lk" style="top:3px;max-width:calc(100% - 6.5px)">Elise</span></div><div class="c r" style="left:1281px;width:113px">1</div><div class="c " style="left:1395px;width:124px"></div><div class="c " style="left:1520px;width:237px">I'll feel more emotionally connected to my car</div><div class="c r" style="left:1758px;width:90px">13872</div><div class="c " style="left:1849px;width:70px"></div><div class="c " style="left:1920px;width:134px"></div><div class="c " style="left:2055px;width:133px"></div><div class="c " style="left:2189px;width:134px"></div><div class="c " style="left:2324px;width:202px"><span class="u">https://fhabricator.automatic.co/T13872</span></div></div><div class="row"><i style="left:425px"></i><i style="left:527px"></i><i style="left:622px"></i><i style="left:700px"></i><i style="left:806px"></i><i style="left:920px"></i><i style="left:1046px"></i><i style="left:1174px"></i><i style="left:1280px"></i><i style="left:1394px"></i><i style="left:1519px"></i><i style="left:1757px"></i><i style="left:1848px"></i><i style="left:1919px"></i><i style="left:2054px"></i><i style="left:2188px"></i><i style="left:2323px"></i><b class="f"></b><span class="num">6</span><div class="c" style="left:50.5px;width:201px">S139: Adapter warns me when time jump<br>will take &gt;1.21 jigowatts</div><div class="c " style="left:253px;width:172px">Adapter warns me when time jump<br>will take &gt;1.21 jigowatts</div><div class="c " style="left:426px;width:101px"><span class="pill" style="left:5px;width:18px;background:#93df8a">5</span></div><div class="c " style="left:528px;width:94px"><span class="pill" style="left:4px;width:18px;background:#93df8a">5</span></div><div class="c " style="left:623px;width:77px"><svg style="left:32.4px;top:5.7px" width="11" height="10.5" viewBox="0 0 11 10.5"><path d="M5.5 0.4 L7 3.6 L10.6 4 L7.9 6.4 L8.7 9.9 L5.5 8.1 L2.3 9.9 L3.1 6.4 L0.4 4 L4 3.6 Z" fill="#13801f" stroke="#13801f" stroke-width="0.6" stroke-linejoin="round"/></svg></div><div class="c " style="left:701px;width:105px"><svg style="left:47px;top:5.4px" width="10.5" height="10.5" viewBox="0 0 10.5 10.5"><path d="M0.9 0.9 V10" stroke="#dc1038" stroke-width="1" stroke-linecap="round"/><path d="M0.9 1 C2.6 -0.2 4.4 0.6 5.6 1.2 C7 1.9 8.4 1.9 9.9 1 V6.6 C8.4 7.6 7 7.5 5.6 6.8 C4.4 6.2 2.6 5.6 0.9 6.8 Z" fill="#dc1038"/></svg></div><div class="c " style="left:807px;width:113px"><span class="lk" style="top:3px;max-width:calc(100% - 6.5px)">Insight: fuel efficiency</span></div><div class="c " style="left:921px;width:125px"><span class="lk" style="top:3px;max-width:calc(100% - 6.5px)">E115: Energy efficient temporal</span></div><div class="c " style="left:1047px;width:127px"><span class="lk" style="top:3px;max-width:calc(100% - 6.5px)">MIP full</span></div><div class="c sp" style="left:1175px;width:105px"><span class="lk" style="top:3px;max-width:calc(100% - 6.5px)">Elise</span></div><div class="c r" style="left:1281px;width:113px">2</div><div class="c " style="left:1395px;width:124px"></div><div class="c " style="left:1520px;width:237px">I can be more aware of how much energy I use<br>when time traveling</div><div class="c r" style="left:1758px;width:90px">13465</div><div class="c " style="left:1849px;width:70px"></div><div class="c " style="left:1920px;width:134px"></div><div class="c " style="left:2055px;width:133px"></div><div class="c " style="left:2189px;width:134px">Is there a way to make it so<br>that the user doesn't hav...</div><div class="c " style="left:2324px;width:202px"><span class="u">https://fhabricator.automatic.co/T13465</span></div></div><div class="row"><i style="left:425px"></i><i style="left:527px"></i><i style="left:622px"></i><i style="left:700px"></i><i style="left:806px"></i><i style="left:920px"></i><i style="left:1046px"></i><i style="left:1174px"></i><i style="left:1280px"></i><i style="left:1394px"></i><i style="left:1519px"></i><i style="left:1757px"></i><i style="left:1848px"></i><i style="left:1919px"></i><i style="left:2054px"></i><i style="left:2188px"></i><i style="left:2323px"></i><b class="f"></b><span class="num">7</span><div class="c" style="left:50.5px;width:201px">S132: Audio tone when adapter detects<br>presence of ghosts</div><div class="c " style="left:253px;width:172px">Audio tone when adapter detects<br>presence of ghosts</div><div class="c " style="left:426px;width:101px"><span class="pill" style="left:5px;width:18px;background:#ffd168">8</span></div><div class="c " style="left:528px;width:94px"><span class="pill" style="left:4px;width:18px;background:#80d7fc">3</span></div><div class="c " style="left:623px;width:77px"><svg style="left:32.4px;top:5.7px" width="11" height="10.5" viewBox="0 0 11 10.5"><path d="M5.5 0.4 L7 3.6 L10.6 4 L7.9 6.4 L8.7 9.9 L5.5 8.1 L2.3 9.9 L3.1 6.4 L0.4 4 L4 3.6 Z" fill="#13801f" stroke="#13801f" stroke-width="0.6" stroke-linejoin="round"/></svg></div><div class="c " style="left:701px;width:105px"></div><div class="c " style="left:807px;width:113px"><span class="lk" style="top:3px;max-width:calc(100% - 6.5px)">Location: driving</span></div><div class="c " style="left:921px;width:125px"><span class="lk" style="top:3px;max-width:calc(100% - 6.5px)">E111: Ghostbusting v1</span></div><div class="c " style="left:1047px;width:127px"><span class="lk" style="top:3px;max-width:calc(100% - 6.5px)">MIP full</span></div><div class="c sp" style="left:1175px;width:105px"><span class="lk" style="top:3px;max-width:calc(100% - 6.5px)">Elise</span></div><div class="c r" style="left:1281px;width:113px">2</div><div class="c " style="left:1395px;width:124px"></div><div class="c " style="left:1520px;width:237px">I can bust ghosts more effectively</div><div class="c r" style="left:1758px;width:90px">11111</div><div class="c " style="left:1849px;width:70px"></div><div class="c " style="left:1920px;width:134px"></div><div class="c " style="left:2055px;width:133px"></div><div class="c " style="left:2189px;width:134px"></div><div class="c " style="left:2324px;width:202px"><span class="u">https://fhabricator.automatic.co/T11111</span></div></div><div class="add"><b class="f"></b><svg style="left:8.5px;top:7.5px" width="8.6" height="8.6" viewBox="0 0 8.6 8.6"><path d="M4.3 0.4 V8.2 M0.4 4.3 H8.2" stroke="#555" stroke-width="0.85" stroke-linecap="round"/></svg></div></div>
<div class="g" style="top:567px;height:187px"><div class="gh"><i style="left:425px"></i><i style="left:527px"></i><i style="left:622px"></i><i style="left:700px"></i><i style="left:806px"></i><i style="left:920px"></i><i style="left:1046px"></i><i style="left:1174px"></i><i style="left:1280px"></i><i style="left:1394px"></i><i style="left:1519px"></i><i style="left:1757px"></i><i style="left:1848px"></i><i style="left:1919px"></i><i style="left:2054px"></i><i style="left:2188px"></i><i style="left:2323px"></i><b class="f"></b><svg class="" style="left:8.9px;top:15.3px" width="8.2" height="4.4" viewBox="0 0 8.2 4.4"><path d="M0.5 0.5 L4.1 3.9000000000000004 L7.699999999999999 0.5" fill="none" stroke="#333" stroke-width="1.1" stroke-linecap="round" stroke-linejoin="round"/></svg><div class="t" style="left:27px;top:5px;font-size:6.7px;letter-spacing:.75px;color:#666;line-height:8px">SPRINT</div><div class="abs" style="left:28.5px;top:15px;height:15.5px;border-radius:2.5px;background:#e6eaf7;padding:0 2.4px 0 4px;font-size:10.4px;font-weight:700;line-height:17.5px;white-space:nowrap;color:#2a2d33;letter-spacing:0.3px">Ferrari 500</div><div class="t" style="right:2293.3px;top:11.3px;font-size:8px;color:#666;letter-spacing:.2px">Count</div><div class="t" style="left:236.5px;top:11.7px;font-size:9.8px;color:#333">3</div></div><div class="row"><i style="left:425px"></i><i style="left:527px"></i><i style="left:622px"></i><i style="left:700px"></i><i style="left:806px"></i><i style="left:920px"></i><i style="left:1046px"></i><i style="left:1174px"></i><i style="left:1280px"></i><i style="left:1394px"></i><i style="left:1519px"></i><i style="left:1757px"></i><i style="left:1848px"></i><i style="left:1919px"></i><i style="left:2054px"></i><i style="left:2188px"></i><i style="left:2323px"></i><b class="f"></b><span class="num">8</span><div class="c" style="left:50.5px;width:201px">S140: Systematic/hydromatic/ultramatic<br>quick switcher</div><div class="c " style="left:253px;width:172px">Systematic/hydromatic/ultramatic<br>quick switcher</div><div class="c " style="left:426px;width:101px"><span class="pill" style="left:5px;width:18px;background:#80d7fc">3</span></div><div class="c " style="left:528px;width:94px"><span class="pill" style="left:4px;width:18px;background:#b5a4f4">2</span></div><div class="c " style="left:623px;width:77px"></div><div class="c " style="left:701px;width:105px"></div><div class="c " style="left:807px;width:113px"><span class="lk" style="top:3px;max-width:calc(100% - 6.5px)">App settings</span></div><div class="c " style="left:921px;width:125px"><span class="lk" style="top:3px;max-width:calc(100% - 6.5px)">E55: Beta style refinement</span></div><div class="c " style="left:1047px;width:127px"><span class="lk" style="top:3px;max-width:calc(100% - 6.5px)">Beta1</span></div><div class="c sp" style="left:1175px;width:105px"><span class="lk" style="top:3px;max-width:calc(100% - 6.5px)">Ferrari 500</span></div><div class="c r" style="left:1281px;width:113px">3</div><div class="c " style="left:1395px;width:124px"></div><div class="c " style="left:1520px;width:237px">Why, it could be greased lightning!</div><div class="c r" style="left:1758px;width:90px">13449</div><div class="c " style="left:1849px;width:70px"></div><div class="c " style="left:1920px;width:134px"></div><div class="c " style="left:2055px;width:133px"></div><div class="c " style="left:2189px;width:134px"></div><div class="c " style="left:2324px;width:202px"><span class="u">https://fhabricator.automatic.co/T13449</span></div></div><div class="row"><i style="left:425px"></i><i style="left:527px"></i><i style="left:622px"></i><i style="left:700px"></i><i style="left:806px"></i><i style="left:920px"></i><i style="left:1046px"></i><i style="left:1174px"></i><i style="left:1280px"></i><i style="left:1394px"></i><i style="left:1519px"></i><i style="left:1757px"></i><i style="left:1848px"></i><i style="left:1919px"></i><i style="left:2054px"></i><i style="left:2188px"></i><i style="left:2323px"></i><b class="f"></b><span class="num">9</span><div class="c" style="left:50.5px;width:201px">S137: Ability to trigger giant robot<br>transformation sequence remotely</div><div class="c " style="left:253px;width:172px">Ability to trigger giant robot<br>transformation sequence remotely</div><div class="c " style="left:426px;width:101px"><span class="pill" style="left:5px;width:22px;background:#ff9eb7">13</span></div><div class="c " style="left:528px;width:94px"><span class="pill" style="left:4px;width:18px;background:#93df8a">5</span></div><div class="c " style="left:623px;width:77px"><svg style="left:32.4px;top:5.7px" width="11" height="10.5" viewBox="0 0 11 10.5"><path d="M5.5 0.4 L7 3.6 L10.6 4 L7.9 6.4 L8.7 9.9 L5.5 8.1 L2.3 9.9 L3.1 6.4 L0.4 4 L4 3.6 Z" fill="#13801f" stroke="#13801f" stroke-width="0.6" stroke-linejoin="round"/></svg></div><div class="c " style="left:701px;width:105px"><svg style="left:47px;top:5.4px" width="10.5" height="10.5" viewBox="0 0 10.5 10.5"><path d="M0.9 0.9 V10" stroke="#dc1038" stroke-width="1" stroke-linecap="round"/><path d="M0.9 1 C2.6 -0.2 4.4 0.6 5.6 1.2 C7 1.9 8.4 1.9 9.9 1 V6.6 C8.4 7.6 7 7.5 5.6 6.8 C4.4 6.2 2.6 5.6 0.9 6.8 Z" fill="#dc1038"/></svg></div><div class="c " style="left:807px;width:113px"><span class="lk" style="top:3px;max-width:calc(100% - 6.5px)">Location: parked</span></div><div class="c " style="left:921px;width:125px"><span class="lk" style="top:3px;max-width:calc(100% - 6.5px)">E117: Robot transformation</span></div><div class="c " style="left:1047px;width:127px"><span class="lk" style="top:3px;max-width:calc(100% - 6.5px)">MIP full</span></div><div class="c sp" style="left:1175px;width:105px"><span class="lk" style="top:3px;max-width:calc(100% - 6.5px)">Ferrari 500</span></div><div class="c r" style="left:1281px;width:113px">2</div><div class="c " style="left:1395px;width:124px"></div><div class="c " style="left:1520px;width:237px">my car can walk to me, instead of me walking to<br>my car</div><div class="c r" style="left:1758px;width:90px">13423</div><div class="c " style="left:1849px;width:70px"></div><div class="c " style="left:1920px;width:134px">Consider edge case where<br>car is in garage or other ...</div><div class="c " style="left:2055px;width:133px"></div><div class="c " style="left:2189px;width:134px"></div><div class="c " style="left:2324px;width:202px"><span class="u">https://fhabricator.automatic.co/T13423</span></div></div><div class="row"><i style="left:425px"></i><i style="left:527px"></i><i style="left:622px"></i><i style="left:700px"></i><i style="left:806px"></i><i style="left:920px"></i><i style="left:1046px"></i><i style="left:1174px"></i><i style="left:1280px"></i><i style="left:1394px"></i><i style="left:1519px"></i><i style="left:1757px"></i><i style="left:1848px"></i><i style="left:1919px"></i><i style="left:2054px"></i><i style="left:2188px"></i><i style="left:2323px"></i><b class="f"></b><span class="num">10</span><div class="c" style="left:50.5px;width:201px">S141: Push notification when nitrous levels<br>low</div><div class="c " style="left:253px;width:172px">Push notification when nitrous<br>levels low</div><div class="c " style="left:426px;width:101px"><span class="pill" style="left:5px;width:18px;background:#80d7fc">3</span></div><div class="c " style="left:528px;width:94px"><span class="pill" style="left:4px;width:18px;background:#93df8a">5</span></div><div class="c " style="left:623px;width:77px"><svg style="left:32.4px;top:5.7px" width="11" height="10.5" viewBox="0 0 11 10.5"><path d="M5.5 0.4 L7 3.6 L10.6 4 L7.9 6.4 L8.7 9.9 L5.5 8.1 L2.3 9.9 L3.1 6.4 L0.4 4 L4 3.6 Z" fill="#13801f" stroke="#13801f" stroke-width="0.6" stroke-linejoin="round"/></svg></div><div class="c " style="left:701px;width:105px"></div><div class="c " style="left:807px;width:113px"><span class="lk" style="top:3px;max-width:calc(100% - 6.5px)">Fuel level</span></div><div class="c " style="left:921px;width:125px"><span class="lk" style="top:3px;max-width:calc(100% - 6.5px)">E112: Racing module v1</span></div><div class="c " style="left:1047px;width:127px"><span class="lk" style="top:3px;max-width:calc(100% - 6.5px)">Beta1</span></div><div class="c sp" style="left:1175px;width:105px"><span class="lk" style="top:3px;max-width:calc(100% - 6.5px)">Ferrari 500</span></div><div class="c r" style="left:1281px;width:113px">3</div><div class="c " style="left:1395px;width:124px"></div><div class="c " style="left:1520px;width:237px">I don't run out of nitrous while I'm street racing</div><div class="c r" style="left:1758px;width:90px">13245</div><div class="c " style="left:1849px;width:70px"></div><div class="c " style="left:1920px;width:134px"></div><div class="c " style="left:2055px;width:133px"></div><div class="c " style="left:2189px;width:134px"></div><div class="c " style="left:2324px;width:202px"><span class="u">https://fhabricator.automatic.co/T13245</span></div></div><div class="add"><b class="f"></b><svg style="left:8.5px;top:7.5px" width="8.6" height="8.6" viewBox="0 0 8.6 8.6"><path d="M4.3 0.4 V8.2 M0.4 4.3 H8.2" stroke="#555" stroke-width="0.85" stroke-linecap="round"/></svg></div></div>
<div class="g" style="top:765px;height:145px"><div class="gh"><i style="left:425px"></i><i style="left:527px"></i><i style="left:622px"></i><i style="left:700px"></i><i style="left:806px"></i><i style="left:920px"></i><i style="left:1046px"></i><i style="left:1174px"></i><i style="left:1280px"></i><i style="left:1394px"></i><i style="left:1519px"></i><i style="left:1757px"></i><i style="left:1848px"></i><i style="left:1919px"></i><i style="left:2054px"></i><i style="left:2188px"></i><i style="left:2323px"></i><b class="f"></b><svg class="" style="left:8.9px;top:15.3px" width="8.2" height="4.4" viewBox="0 0 8.2 4.4"><path d="M0.5 0.5 L4.1 3.9000000000000004 L7.699999999999999 0.5" fill="none" stroke="#333" stroke-width="1.1" stroke-linecap="round" stroke-linejoin="round"/></svg><div class="t" style="left:27px;top:5px;font-size:6.7px;letter-spacing:.75px;color:#666;line-height:8px">SPRINT</div><div class="abs" style="left:28.5px;top:15px;height:15.5px;border-radius:2.5px;background:#e6eaf7;padding:0 2.4px 0 4px;font-size:10.4px;font-weight:700;line-height:17.5px;white-space:nowrap;color:#2a2d33;letter-spacing:0px">Gremlin</div><div class="t" style="right:2293.3px;top:11.3px;font-size:8px;color:#666;letter-spacing:.2px">Count</div><div class="t" style="left:236.5px;top:11.7px;font-size:9.8px;color:#333">2</div></div><div class="row"><i style="left:425px"></i><i style="left:527px"></i><i style="left:622px"></i><i style="left:700px"></i><i style="left:806px"></i><i style="left:920px"></i><i style="left:1046px"></i><i style="left:1174px"></i><i style="left:1280px"></i><i style="left:1394px"></i><i style="left:1519px"></i><i style="left:1757px"></i><i style="left:1848px"></i><i style="left:1919px"></i><i style="left:2054px"></i><i style="left:2188px"></i><i style="left:2323px"></i><b class="f"></b><span class="num">11</span><div class="c" style="left:50.5px;width:201px">S145: Car (in robot form) will offer a hug<br>when I'm stressed out</div><div class="c " style="left:253px;width:172px">Car (in robot form) will offer a hug<br>when I'm stressed out</div><div class="c " style="left:426px;width:101px"><span class="pill" style="left:5px;width:22px;background:#ff9eb7">13</span></div><div class="c " style="left:528px;width:94px"><span class="pill" style="left:4px;width:22px;background:#ff9eb7">13</span></div><div class="c " style="left:623px;width:77px"></div><div class="c " style="left:701px;width:105px"><svg style="left:47px;top:5.4px" width="10.5" height="10.5" viewBox="0 0 10.5 10.5"><path d="M0.9 0.9 V10" stroke="#dc1038" stroke-width="1" stroke-linecap="round"/><path d="M0.9 1 C2.6 -0.2 4.4 0.6 5.6 1.2 C7 1.9 8.4 1.9 9.9 1 V6.6 C8.4 7.6 7 7.5 5.6 6.8 C4.4 6.2 2.6 5.6 0.9 6.8 Z" fill="#dc1038"/></svg></div><div class="c " style="left:807px;width:113px"><span class="lk" style="top:3px;max-width:calc(100% - 6.5px)">Location: parked</span></div><div class="c " style="left:921px;width:125px"><span class="lk" style="top:3px;max-width:calc(100% - 6.5px)">E116: Robot AI (emotional support)</span></div><div class="c " style="left:1047px;width:127px"><span class="lk" style="top:3px;max-width:calc(100% - 6.5px)">Full release</span></div><div class="c sp" style="left:1175px;width:105px"><span class="lk" style="top:3px;max-width:calc(100% - 6.5px)">Gremlin</span></div><div class="c r" style="left:1281px;width:113px">5</div><div class="c " style="left:1395px;width:124px"></div><div class="c " style="left:1520px;width:237px">I'll know that I'm not alone and someone loves me</div><div class="c r" style="left:1758px;width:90px">13333</div><div class="c " style="left:1849px;width:70px"></div><div class="c " style="left:1920px;width:134px"></div><div class="c " style="left:2055px;width:133px"></div><div class="c " style="left:2189px;width:134px">Make sure that adapter<br>gets verbal consent befor...</div><div class="c " style="left:2324px;width:202px"><span class="u">https://fhabricator.automatic.co/T13333</span></div></div><div class="row"><i style="left:425px"></i><i style="left:527px"></i><i style="left:622px"></i><i style="left:700px"></i><i style="left:806px"></i><i style="left:920px"></i><i style="left:1046px"></i><i style="left:1174px"></i><i style="left:1280px"></i><i style="left:1394px"></i><i style="left:1519px"></i><i style="left:1757px"></i><i style="left:1848px"></i><i style="left:1919px"></i><i style="left:2054px"></i><i style="left:2188px"></i><i style="left:2323px"></i><b class="f"></b><span class="num">12</span><div class="c" style="left:50.5px;width:201px">S136: Show progress bar as ejector seat<br>initializes</div><div class="c " style="left:253px;width:172px">Show progress bar as ejector seat<br>initializes</div><div class="c " style="left:426px;width:101px"><span class="pill" style="left:5px;width:16px;background:#95bdf9">1</span></div><div class="c " style="left:528px;width:94px"><span class="pill" style="left:4px;width:18px;background:#80d7fc">3</span></div><div class="c " style="left:623px;width:77px"><svg style="left:32.4px;top:5.7px" width="11" height="10.5" viewBox="0 0 11 10.5"><path d="M5.5 0.4 L7 3.6 L10.6 4 L7.9 6.4 L8.7 9.9 L5.5 8.1 L2.3 9.9 L3.1 6.4 L0.4 4 L4 3.6 Z" fill="#13801f" stroke="#13801f" stroke-width="0.6" stroke-linejoin="round"/></svg></div><div class="c " style="left:701px;width:105px"></div><div class="c " style="left:807px;width:113px"><span class="lk" style="top:3px;max-width:calc(100% - 6.5px)">Device connection</span></div><div class="c " style="left:921px;width:125px"><span class="lk" style="top:3px;max-width:calc(100% - 6.5px)">E114: Ejector seat support</span></div><div class="c " style="left:1047px;width:127px"><span class="lk" style="top:3px;max-width:calc(100% - 6.5px)">007/in-beta partnership</span></div><div class="c sp" style="left:1175px;width:105px"><span class="lk" style="top:3px;max-width:calc(100% - 6.5px)">Gremlin</span></div><div class="c r" style="left:1281px;width:113px">4</div><div class="c " style="left:1395px;width:124px"></div><div class="c " style="left:1520px;width:237px">I can prepare myself mentally for ejection<br>sequence</div><div class="c r" style="left:1758px;width:90px">93713</div><div class="c " style="left:1849px;width:70px"></div><div class="c " style="left:1920px;width:134px"></div><div class="c " style="left:2055px;width:133px"></div><div class="c " style="left:2189px;width:134px"></div><div class="c " style="left:2324px;width:202px"><span class="u">https://fhabricator.automatic.co/T93713</span></div></div><div class="add"><b class="f"></b><svg style="left:8.5px;top:7.5px" width="8.6" height="8.6" viewBox="0 0 8.6 8.6"><path d="M4.3 0.4 V8.2 M0.4 4.3 H8.2" stroke="#555" stroke-width="0.85" stroke-linecap="round"/></svg></div></div>
<div class="g" style="top:921px;height:145px"><div class="gh"><i style="left:425px"></i><i style="left:527px"></i><i style="left:622px"></i><i style="left:700px"></i><i style="left:806px"></i><i style="left:920px"></i><i style="left:1046px"></i><i style="left:1174px"></i><i style="left:1280px"></i><i style="left:1394px"></i><i style="left:1519px"></i><i style="left:1757px"></i><i style="left:1848px"></i><i style="left:1919px"></i><i style="left:2054px"></i><i style="left:2188px"></i><i style="left:2323px"></i><b class="f"></b><svg class="" style="left:8.9px;top:15.3px" width="8.2" height="4.4" viewBox="0 0 8.2 4.4"><path d="M0.5 0.5 L4.1 3.9000000000000004 L7.699999999999999 0.5" fill="none" stroke="#333" stroke-width="1.1" stroke-linecap="round" stroke-linejoin="round"/></svg><div class="t" style="left:27px;top:5px;font-size:6.7px;letter-spacing:.75px;color:#666;line-height:8px">SPRINT</div><div class="abs" style="left:28.5px;top:15px;height:15.5px;border-radius:2.5px;background:#e6eaf7;padding:0 2.4px 0 4px;font-size:10.4px;font-weight:700;line-height:17.5px;white-space:nowrap;color:#2a2d33;letter-spacing:0px">Icebox — someday</div><div class="t" style="right:2293.3px;top:11.3px;font-size:8px;color:#666;letter-spacing:.2px">Count</div><div class="t" style="left:236.5px;top:11.7px;font-size:9.8px;color:#333">2</div></div><div class="row"><i style="left:425px"></i><i style="left:527px"></i><i style="left:622px"></i><i style="left:700px"></i><i style="left:806px"></i><i style="left:920px"></i><i style="left:1046px"></i><i style="left:1174px"></i><i style="left:1280px"></i><i style="left:1394px"></i><i style="left:1519px"></i><i style="left:1757px"></i><i style="left:1848px"></i><i style="left:1919px"></i><i style="left:2054px"></i><i style="left:2188px"></i><i style="left:2323px"></i><b class="f"></b><span class="num">13</span><div class="c" style="left:50.5px;width:201px">S144: Different ghost detection audio<br>tones for different ghost types</div><div class="c " style="left:253px;width:172px">Different ghost detection audio<br>tones for different ghost types</div><div class="c " style="left:426px;width:101px"><span class="pill" style="left:5px;width:18px;background:#80d7fc">3</span></div><div class="c " style="left:528px;width:94px"><span class="pill" style="left:4px;width:18px;background:#93df8a">5</span></div><div class="c " style="left:623px;width:77px"></div><div class="c " style="left:701px;width:105px"></div><div class="c " style="left:807px;width:113px"><span class="lk" style="top:3px;max-width:calc(100% - 6.5px)">Location: driving</span></div><div class="c " style="left:921px;width:125px"><span class="lk" style="top:3px;max-width:calc(100% - 6.5px)">E102: Misc improvements</span></div><div class="c " style="left:1047px;width:127px"><span class="lk" style="top:3px;max-width:calc(100% - 6.5px)">No hard requirement</span></div><div class="c sp" style="left:1175px;width:105px"><span class="lk" style="top:3px;max-width:calc(100% - 6.5px)">Icebox — someday</span></div><div class="c r" style="left:1281px;width:113px">100</div><div class="c " style="left:1395px;width:124px"></div><div class="c " style="left:1520px;width:237px">I can easily differentiate between ghouls,<br>poltergeists, specters, and friendly ghosts</div><div class="c r" style="left:1758px;width:90px"></div><div class="c " style="left:1849px;width:70px"></div><div class="c " style="left:1920px;width:134px"></div><div class="c " style="left:2055px;width:133px">Decide which tones are the<br>most appropriately spooky</div><div class="c " style="left:2189px;width:134px"></div><div class="c " style="left:2324px;width:202px">(Enter id in FhabTask)</div></div><div class="row"><i style="left:425px"></i><i style="left:527px"></i><i style="left:622px"></i><i style="left:700px"></i><i style="left:806px"></i><i style="left:920px"></i><i style="left:1046px"></i><i style="left:1174px"></i><i style="left:1280px"></i><i style="left:1394px"></i><i style="left:1519px"></i><i style="left:1757px"></i><i style="left:1848px"></i><i style="left:1919px"></i><i style="left:2054px"></i><i style="left:2188px"></i><i style="left:2323px"></i><b class="f"></b><span class="num">14</span><div class="c" style="left:50.5px;width:201px">S134: Switch blue shell evasion sequence<br>to manual</div><div class="c " style="left:253px;width:172px">Switch blue shell evasion sequence<br>to manual</div><div class="c " style="left:426px;width:101px"><span class="pill" style="left:5px;width:18px;background:#ffd168">8</span></div><div class="c " style="left:528px;width:94px"><span class="pill" style="left:4px;width:18px;background:#93df8a">5</span></div><div class="c " style="left:623px;width:77px"><svg style="left:32.4px;top:5.7px" width="11" height="10.5" viewBox="0 0 11 10.5"><path d="M5.5 0.4 L7 3.6 L10.6 4 L7.9 6.4 L8.7 9.9 L5.5 8.1 L2.3 9.9 L3.1 6.4 L0.4 4 L4 3.6 Z" fill="#13801f" stroke="#13801f" stroke-width="0.6" stroke-linejoin="round"/></svg></div><div class="c " style="left:701px;width:105px"><svg style="left:47px;top:5.4px" width="10.5" height="10.5" viewBox="0 0 10.5 10.5"><path d="M0.9 0.9 V10" stroke="#dc1038" stroke-width="1" stroke-linecap="round"/><path d="M0.9 1 C2.6 -0.2 4.4 0.6 5.6 1.2 C7 1.9 8.4 1.9 9.9 1 V6.6 C8.4 7.6 7 7.5 5.6 6.8 C4.4 6.2 2.6 5.6 0.9 6.8 Z" fill="#dc1038"/></svg></div><div class="c " style="left:807px;width:113px"><span class="lk" style="top:3px;max-width:calc(100% - 6.5px)">App settings</span></div><div class="c " style="left:921px;width:125px"><span class="lk" style="top:3px;max-width:calc(100% - 6.5px)">E112: Racing module v1</span></div><div class="c " style="left:1047px;width:127px"><span class="lk" style="top:3px;max-width:calc(100% - 6.5px)">No hard requirement</span></div><div class="c sp" style="left:1175px;width:105px"><span class="lk" style="top:3px;max-width:calc(100% - 6.5px)">Icebox — someday</span></div><div class="c r" style="left:1281px;width:113px">100</div><div class="c " style="left:1395px;width:124px"></div><div class="c " style="left:1520px;width:237px">I can decide how I want to deal with incoming<br>projectiles</div><div class="c r" style="left:1758px;width:90px">32436</div><div class="c " style="left:1849px;width:70px"></div><div class="c " style="left:1920px;width:134px"></div><div class="c " style="left:2055px;width:133px"></div><div class="c " style="left:2189px;width:134px"></div><div class="c " style="left:2324px;width:202px"><span class="u">https://fhabricator.automatic.co/T32436</span></div></div><div class="add"><b class="f"></b><svg style="left:8.5px;top:7.5px" width="8.6" height="8.6" viewBox="0 0 8.6 8.6"><path d="M4.3 0.4 V8.2 M0.4 4.3 H8.2" stroke="#555" stroke-width="0.85" stroke-linecap="round"/></svg></div></div>
</body></html>
